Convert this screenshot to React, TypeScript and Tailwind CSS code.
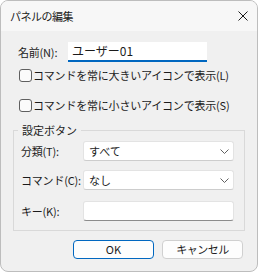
import { ReactNode } from "react";

function Chevron() {
  return (
    <svg width="9" height="5" viewBox="0 0 9 5" className="shrink-0">
      <path d="M0.5 0.5 L4.5 4.5 L8.5 0.5" fill="none" stroke="#606060" strokeWidth="1" />
    </svg>
  );
}

function Checkbox({ label }: { label: string }) {
  return (
    <label className="flex items-center gap-[1px] pl-[18px] h-[14px]">
      <span className="w-[13px] h-[13px] rounded-[3px] border border-[#5f5f5f] bg-[#fbfbfb] shrink-0" />
      <span className="leading-[14px] whitespace-nowrap tracking-[-0.2px]">{label}</span>
    </label>
  );
}

function Row({ label, children }: { label: string; children: ReactNode }) {
  return (
    <div className="flex items-center pl-[7px]">
      <span className="w-[62px] whitespace-nowrap tracking-[-0.2px]">{label}</span>
      {children}
    </div>
  );
}

function Select({ value }: { value: string }) {
  return (
    <div className="w-[151px] h-[20px] flex items-center justify-between pl-[5px] pr-[4px] bg-white border border-[#e3e3e3] border-b-[#cdcdcd] rounded-[3px]">
      <span>{value}</span>
      <Chevron />
    </div>
  );
}

export default function App() {
  return (
    <div className="w-[258px] h-[272px] bg-white font-['Noto_Sans_CJK_JP','Noto_Sans',sans-serif] text-[11px] text-[#1b1b1b]">
      <div className="w-full h-full flex flex-col border border-[#bdbdbd] rounded-[8px] overflow-hidden bg-[#f0f0f0]">

        {/* title bar */}
        <div className="h-[30px] shrink-0 flex items-center justify-between pl-[9px] pr-[9px] bg-[#f7f7f7]">
          <span className="tracking-[-0.5px]">パネルの編集</span>
          <svg width="10" height="10" viewBox="0 0 10 10">
            <path d="M0.5 0.5 L9.5 9.5 M9.5 0.5 L0.5 9.5" stroke="#1b1b1b" strokeWidth="1" />
          </svg>
        </div>

        {/* name */}
        <div className="flex items-center pl-[17px] mt-[11px]">
          <span className="w-[50px] whitespace-nowrap tracking-[-0.2px]">名前(N):</span>
          <div className="w-[139px] h-[20px] flex items-center pl-[4px] bg-white border-b-2 border-[#0067c0] text-[12px]">
            ユーザー01
          </div>
        </div>

        <div className="mt-[6px]">
          <Checkbox label="コマンドを常に大きいアイコンで表示(L)" />
        </div>
        <div className="mt-[16px]">
          <Checkbox label="コマンドを常に小さいアイコンで表示(S)" />
        </div>

        {/* group box */}
        <fieldset className="mx-[12px] mt-[11px] border border-[#d9d9d9] pb-[9px]">
          <legend className="ml-[4px] px-[4px] leading-[14px]">設定ボタン</legend>
          <div className="flex flex-col gap-[9px] mt-[4px]">
            <Row label="分類(T):">
              <Select value="すべて" />
            </Row>
            <Row label="コマンド(C):">
              <Select value="なし" />
            </Row>
            <div className="mt-[2px]">
              <Row label="キー(K):">
                <div className="w-[151px] h-[20px] bg-white border border-[#e3e3e3] border-b-[#8c8c8c] rounded-[3px]" />
              </Row>
            </div>
          </div>
        </fieldset>

        {/* buttons */}
        <div className="flex justify-end gap-[8px] pr-[14px] mt-[9px]">
          <button className="w-[81px] h-[19px] flex items-center justify-center bg-[#fdfdfd] border border-[#0067c0] rounded-[4px] text-[11px] font-normal">
            OK
          </button>
          <button className="w-[81px] h-[19px] flex items-center justify-center bg-[#fdfdfd] border border-[#d0d0d0] rounded-[4px] text-[11px] tracking-[-0.5px]">
            キャンセル
          </button>
        </div>
      </div>
    </div>
  );
}
